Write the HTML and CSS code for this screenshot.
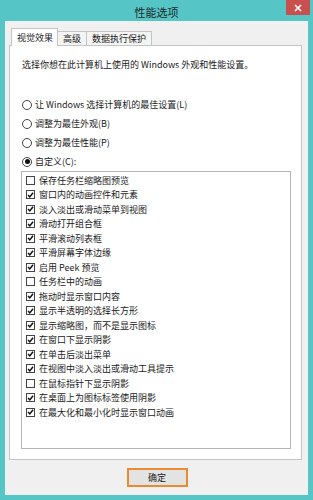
FILE: index.html
```html
<!DOCTYPE html>
<html lang="zh-CN">
<head>
  <meta charset="UTF-8">
  <title>性能选项</title>
  <link rel="stylesheet" href="styles.css">
</head>
<body>
  <div class="window">
    <div class="titlebar">
      <span></span>
      <span class="title">性能选项</span>
      <button class="close-btn">
        <svg width="8" height="8" viewBox="0 0 8 8"><path d="M1 1 L7 7 M7 1 L1 7" stroke="#fff" stroke-width="1.6"/></svg>
      </button>
    </div>

    <div class="dialog">
      <div class="tabs">
        <div class="tab active">视觉效果</div>
        <div class="tab">高级</div>
        <div class="tab">数据执行保护</div>
      </div>

      <div class="panel">
        <p class="intro">选择你想在此计算机上使用的 Windows 外观和性能设置。</p>

        <div class="radios">
          <label class="radio-row"><span class="radio"></span>让 Windows 选择计算机的最佳设置(L)</label>
          <label class="radio-row"><span class="radio"></span>调整为最佳外观(B)</label>
          <label class="radio-row"><span class="radio"></span>调整为最佳性能(P)</label>
          <label class="radio-row"><span class="radio on"></span>自定义(C):</label>
        </div>

        <ul class="options" id="options"></ul>
      </div>

      <div class="footer">
        <button class="ok-btn">确定</button>
      </div>
    </div>
  </div>

  <script>
    // visual effect options, true = checked
    const options = [
      ['保存任务栏缩略图预览', false],
      ['窗口内的动画控件和元素', true],
      ['淡入淡出或滑动菜单到视图', true],
      ['滑动打开组合框', true],
      ['平滑滚动列表框', true],
      ['平滑屏幕字体边缘', true],
      ['启用 Peek 预览', true],
      ['任务栏中的动画', false],
      ['拖动时显示窗口内容', true],
      ['显示半透明的选择长方形', true],
      ['显示缩略图，而不是显示图标', true],
      ['在窗口下显示阴影', true],
      ['在单击后淡出菜单', true],
      ['在视图中淡入淡出或滑动工具提示', true],
      ['在鼠标指针下显示阴影', false],
      ['在桌面上为图标标签使用阴影', true],
      ['在最大化和最小化时显示窗口动画', true]
    ];

    const check = '<svg width="8" height="8" viewBox="0 0 8 8"><path d="M1.2 4 L3.2 6.2 L6.9 1.4" fill="none" stroke="#111" stroke-width="1.7"/></svg>';

    document.getElementById('options').innerHTML = options.map(([text, on]) =>
      `<li><span class="checkbox">${on ? check : ''}</span>${text}</li>`
    ).join('');
  </script>
</body>
</html>
```

FILE: styles.css
```css
/* Reset default styles */
* {
  margin: 0;
  padding: 0;
  box-sizing: border-box;
}

body {
  font-family: "Noto Sans CJK SC", "Noto Sans", sans-serif;
  font-size: 9px;
  color: #1a1a1a;
  background: #fff;
}

.window {
  width: 313px;
  height: 500px;
  background: #55c5c6;
  display: flex;
  flex-direction: column;
}

.titlebar {
  height: 21px;
  display: grid;
  grid-template-columns: 1fr auto 1fr;
}

.title {
  font-size: 11px;
  line-height: 24px;
  color: #1f2a2a;
}

.close-btn {
  justify-self: end;
  width: 24px;
  height: 15px;
  margin-right: 3px;
  border: none;
  background: #c9504f;
  display: flex;
  align-items: center;
  justify-content: center;
}

.dialog {
  flex: 1;
  margin: 0 5px 5px 5px;
  background: #f0f0f0;
  padding: 7px 6px 0 4px;
  display: flex;
  flex-direction: column;
}

.tabs {
  display: flex;
  align-items: flex-end;
  padding-left: 2px;
  height: 17px;
}

.tab {
  height: 14px;
  padding: 0 5px;
  line-height: 13px;
  border: 1px solid #c4c4c4;
  border-bottom: none;
  background: #f4f4f4;
}

.tab + .tab {
  border-left: none;
}

.tab.active {
  height: 18px;
  margin-bottom: -1px;
  line-height: 17px;
  padding: 0 4px 0 5px;
  background: #fff;
  border-color: #c4c4c4;
  position: relative;
  z-index: 1;
}

.panel {
  height: 415px;
  background: #fff;
  border: 1px solid #c4c4c4;
  padding: 13px 10px 0 11px;
}

.intro {
  line-height: 12px;
  padding-left: 1px;
}

.radios {
  margin-top: 24px;
  padding-left: 1px;
}

.radio-row {
  display: flex;
  align-items: center;
  height: 19px;
}

.radio {
  width: 10px;
  height: 10px;
  border: 1px solid #444;
  border-radius: 50%;
  margin-right: 3px;
  display: flex;
  align-items: center;
  justify-content: center;
}

.radio.on::after {
  content: "";
  width: 5px;
  height: 5px;
  border-radius: 50%;
  background: #111;
}

.options {
  list-style: none;
  height: 278px;
  border: 1px solid #b5b5b5;
  padding: 1px 0 0 4px;
}

.options li {
  display: flex;
  align-items: center;
  height: 14.5px;
}

.checkbox {
  width: 9px;
  height: 9px;
  border: 1px solid #444;
  background: #fff;
  margin-right: 4px;
  display: flex;
  align-items: center;
  justify-content: center;
}

.footer {
  display: flex;
  justify-content: center;
  padding-top: 8px;
  padding-left: 3px;
}

.ok-btn {
  width: 61px;
  height: 19px;
  font-family: inherit;
  font-size: 9px;
  color: #1a1a1a;
  background: #e3e3e3;
  border: 2px solid #ea8a33;
}
```
